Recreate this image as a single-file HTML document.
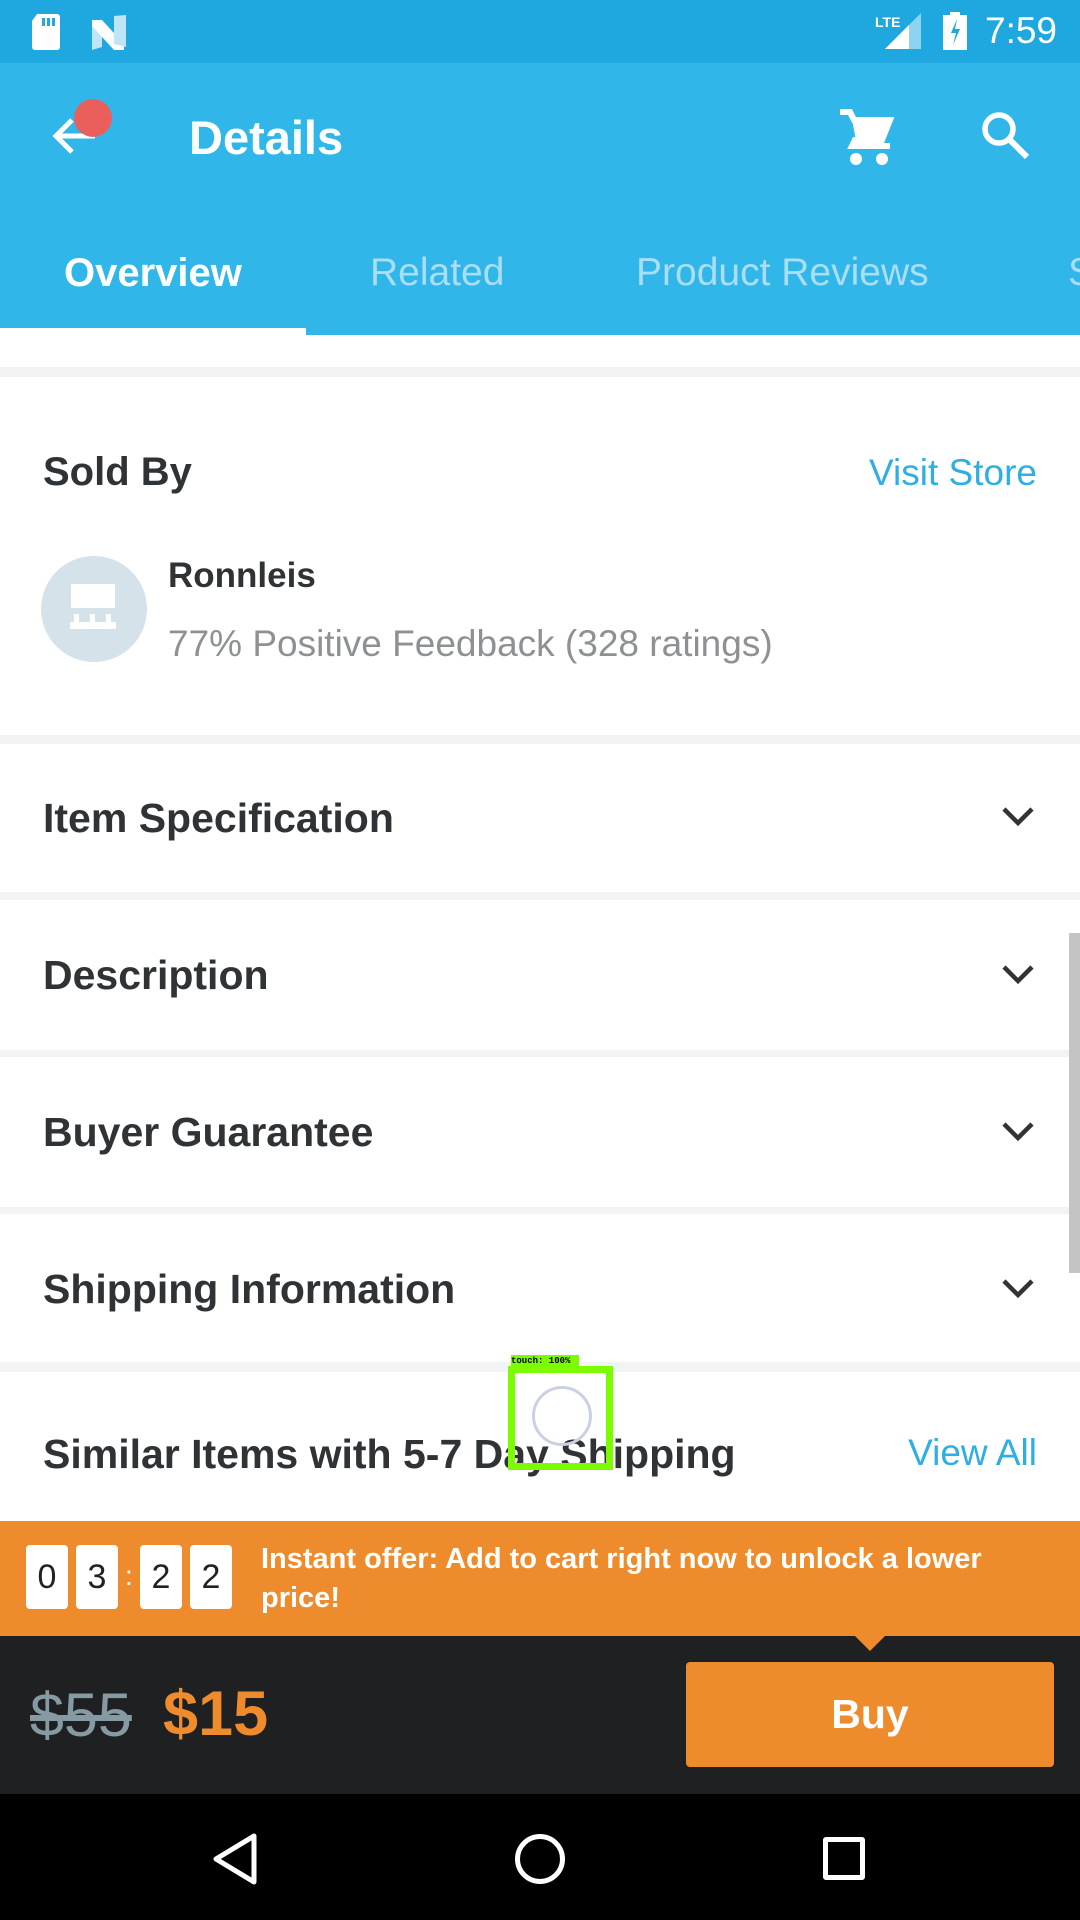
<!DOCTYPE html>
<html><head><meta charset="utf-8"><style>
*{margin:0;padding:0;box-sizing:border-box}
body{width:1080px;height:1920px;position:relative;overflow:hidden;background:#fff;font-family:"Liberation Sans",sans-serif}
.abs{position:absolute}
.h{position:absolute;left:43px;font-weight:bold;font-size:41px;color:#2f3336}
.div{position:absolute;left:0;width:1080px;background:#f2f3f4}
.chev{position:absolute;left:1000px}
.tb{position:absolute;top:1545px;width:42px;height:64px;background:#fff;border-radius:4px;font-size:34px;color:#222;text-align:center;line-height:64px}
</style></head><body>
<div class="abs" style="left:0;top:0;width:1080px;height:63px;background:#1fa8e0"></div>
<div class="abs" style="left:0;top:63px;width:1080px;height:272px;background:#31b6ea"></div>
<svg class="abs" style="left:30px;top:12px" width="110" height="40"><path d="M7 2h20a3 3 0 0 1 3 3v30a3 3 0 0 1-3 3H5a3 3 0 0 1-3-3V9z" fill="#fff"/><rect x="12" y="6" width="3" height="8" fill="#1fa8e0"/><rect x="17" y="6" width="3" height="8" fill="#1fa8e0"/><rect x="22" y="6" width="3" height="8" fill="#1fa8e0"/><path d="M62 8l10 3v24l-10 3z" fill="#bfe6f7"/><path d="M62 8h10l22 24v6H84L62 14z" fill="#fff"/><path d="M84 4l12-1v32l-12-3z" fill="#bfe6f7"/></svg>
<div class="abs" style="left:875px;top:14px;color:#fff;font-size:14px;font-weight:bold">LTE</div>
<svg class="abs" style="left:885px;top:13px" width="40" height="38"><path d="M36 0V36H0z" fill="#8dd3f2"/><path d="M24 12V36H0z" fill="#fff"/></svg>
<svg class="abs" style="left:942px;top:12px" width="27" height="38"><rect x="8" y="0" width="10" height="4" fill="#fff"/><rect x="1" y="3" width="24" height="35" fill="#fff"/><path d="M15 7l-6 14h5l-3 12 7-16h-5z" fill="#1fa8e0"/></svg>
<div class="abs" style="left:985px;top:10px;color:#fff;font-size:37px">7:59</div>
<svg class="abs" style="left:48px;top:110px" width="60" height="55"><path d="M47 26H8M24 10L8 26l16 16" stroke="#fff" stroke-width="5" fill="none"/></svg>
<div class="abs" style="left:74px;top:99px;width:38px;height:38px;border-radius:50%;background:#ea5f5c"></div>
<div class="abs" style="left:189px;top:110px;color:#fff;font-size:47px;font-weight:bold">Details</div>
<svg class="abs" style="left:838px;top:108px" width="62" height="58"><path d="M2 4h10l4 8h36l-8 20H17l-3 6h38" stroke="#fff" stroke-width="6" fill="none"/><path d="M14 12h38l-7 20H18z" fill="#fff"/><circle cx="18" cy="51" r="6" fill="#fff"/><circle cx="44" cy="51" r="6" fill="#fff"/></svg>
<svg class="abs" style="left:980px;top:110px" width="54" height="54"><circle cx="19" cy="19" r="14" stroke="#fff" stroke-width="5.5" fill="none"/><path d="M29 29l18 18" stroke="#fff" stroke-width="6"/></svg>
<div class="abs" style="left:64px;top:251px;color:#fff;font-size:40px;font-weight:bold">Overview</div>
<div class="abs" style="left:370px;top:251px;color:#a9def4;font-size:39px">Related</div>
<div class="abs" style="left:636px;top:251px;color:#a9def4;font-size:39px">Product Reviews</div>
<div class="abs" style="left:1068px;top:251px;color:#a9def4;font-size:39px">S</div>
<div class="abs" style="left:0;top:328px;width:306px;height:7px;background:#fff"></div>
<div class="div" style="top:367px;height:10px"></div>
<div class="h" style="top:450px;font-size:40px">Sold By</div>
<div class="abs" style="right:43px;top:452px;color:#2eaee2;font-size:37px">Visit Store</div>
<div class="abs" style="left:41px;top:556px;width:106px;height:106px;border-radius:50%;background:#d5e2ea"></div>
<svg class="abs" style="left:68px;top:584px" width="52" height="50"><rect x="3" y="0" width="44" height="24" fill="#fff"/><rect x="6" y="30" width="5" height="10" fill="#fff"/><rect x="22" y="30" width="5" height="10" fill="#fff"/><rect x="38" y="30" width="5" height="10" fill="#fff"/><rect x="2" y="38" width="46" height="7" fill="#fff"/></svg>
<div class="abs" style="left:168px;top:556px;color:#2f3336;font-size:35px;font-weight:bold">Ronnleis</div>
<div class="abs" style="left:168px;top:623px;color:#8e9193;font-size:37px">77% Positive Feedback (328 ratings)</div>
<div class="div" style="top:735px;height:9px"></div>
<div class="h" style="top:795px">Item Specification</div>
<div class="div" style="top:892px;height:8px"></div>
<div class="h" style="top:952px">Description</div>
<div class="div" style="top:1050px;height:7px"></div>
<div class="h" style="top:1109px">Buyer Guarantee</div>
<div class="div" style="top:1207px;height:7px"></div>
<div class="h" style="top:1266px">Shipping Information</div>
<div class="div" style="top:1362px;height:10px"></div>
<div class="h" style="top:1431px">Similar Items with 5-7 Day Shipping</div>
<div class="abs" style="right:43px;top:1432px;color:#2eaee2;font-size:37px">View All</div>
<svg class="chev" style="top:805px" width="36" height="26"><path d="M4 4l14 14L32 4" stroke="#333" stroke-width="4.5" fill="none"/></svg>
<svg class="chev" style="top:963px" width="36" height="26"><path d="M4 4l14 14L32 4" stroke="#333" stroke-width="4.5" fill="none"/></svg>
<svg class="chev" style="top:1120px" width="36" height="26"><path d="M4 4l14 14L32 4" stroke="#333" stroke-width="4.5" fill="none"/></svg>
<svg class="chev" style="top:1277px" width="36" height="26"><path d="M4 4l14 14L32 4" stroke="#333" stroke-width="4.5" fill="none"/></svg>
<div class="abs" style="left:1069px;top:933px;width:11px;height:340px;background:#c4c4c4"></div>
<div class="abs" style="left:511px;top:1355px;width:68px;height:12px;background:#7cfc00;font-family:'Liberation Mono',monospace;font-size:9px;font-weight:bold;line-height:12px;color:#000">touch: 100%</div>
<div class="abs" style="left:508px;top:1366px;width:105px;height:104px;border:7px solid #7cfc00"></div>
<div class="abs" style="left:532px;top:1386px;width:60px;height:60px;border-radius:50%;border:3px solid #ccd0e6"></div>
<div class="abs" style="left:0;top:1521px;width:1080px;height:115px;background:#ee8c2d"></div>
<div class="tb" style="left:26px">0</div>
<div class="tb" style="left:76px">3</div>
<div class="abs" style="left:125px;top:1560px;color:#fff;font-size:28px">:</div>
<div class="tb" style="left:140px">2</div>
<div class="tb" style="left:190px">2</div>
<div class="abs" style="left:261px;top:1540px;width:780px;color:#fff;font-size:29px;font-weight:bold;line-height:39px">Instant offer: Add to cart right now to unlock a lower price!</div>
<div class="abs" style="left:0;top:1636px;width:1080px;height:158px;background:#1e2022"></div>
<svg class="abs" style="left:855px;top:1636px" width="30" height="16"><path d="M0 0h30L15 15z" fill="#ee8c2d"/></svg>
<div class="abs" style="left:30px;top:1680px;color:#869aa4;font-size:61px;text-decoration:line-through">$55</div>
<div class="abs" style="left:163px;top:1678px;color:#ee8c2d;font-size:63px;font-weight:bold">$15</div>
<div class="abs" style="left:686px;top:1662px;width:368px;height:105px;background:#ee8c2d;border-radius:4px;color:#fff;font-size:41px;font-weight:bold;text-align:center;line-height:105px">Buy</div>
<div class="abs" style="left:0;top:1794px;width:1080px;height:126px;background:#000"></div>
<svg class="abs" style="left:210px;top:1832px" width="50" height="54"><path d="M44 4L6 27l38 23z" stroke="#fff" stroke-width="5" fill="none" stroke-linejoin="round"/></svg>
<div class="abs" style="left:515px;top:1834px;width:50px;height:50px;border-radius:50%;border:5px solid #fff"></div>
<div class="abs" style="left:823px;top:1837px;width:42px;height:43px;border:5px solid #fff;border-radius:3px"></div>
</body></html>
